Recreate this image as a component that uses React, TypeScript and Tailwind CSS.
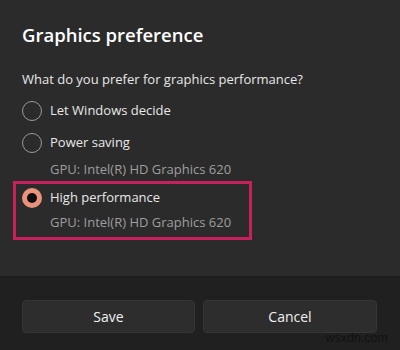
import React from 'react'

const font = { fontFamily: '"Open Sans", "Noto Sans", sans-serif' }

function Radio({ checked }: { checked?: boolean }) {
  if (checked) {
    return (
      <span className="flex h-[20px] w-[20px] shrink-0 items-center justify-center rounded-full bg-[#ea927c]">
        <span className="h-[10px] w-[10px] rounded-full bg-[#0e0e0e]" />
      </span>
    )
  }
  return <span className="h-[20px] w-[20px] shrink-0 rounded-full border border-[#9a9a9a]" />
}

function Option({
  label,
  gpu,
  checked,
  row = 'h-[32px]',
}: {
  label: string
  gpu?: string
  checked?: boolean
  row?: string
}) {
  return (
    <div className="flex flex-col">
      <div className={`flex items-center gap-[8px] ${row}`}>
        <Radio checked={checked} />
        <span className="text-[13px] text-[#e8e8e8]">{label}</span>
      </div>
      {gpu && <div className="-mt-[2px] pl-[28px] text-[13px] leading-[24px] text-[#9e9e9e]">{gpu}</div>}
    </div>
  )
}

export default function App() {
  return (
    <div className="relative flex h-[350px] w-[400px] flex-col bg-[#2b2b2b]" style={font}>
      <div className="flex h-[276px] flex-col px-[22px] pt-[20px]">
        <h1 className="text-[18.5px] font-semibold leading-[30px] text-white">Graphics preference</h1>
        <p className="mt-[19px] text-[13px] leading-[20px] text-[#e8e8e8]">What do you prefer for graphics performance?</p>
        <div className="mt-[6px] flex flex-col">
          <Option label="Let Windows decide" />
          <Option label="Power saving" gpu="GPU: Intel(R) HD Graphics 620" />
          <div className="-ml-[9px] w-[239px] border-[3px] border-[#c91f5c] pb-[3px] pl-[6px]">
            <Option label="High performance" gpu="GPU: Intel(R) HD Graphics 620" checked row="h-[28px]" />
          </div>
        </div>
      </div>
      <div className="flex flex-1 gap-[8px] border-t border-[#1c1c1c] bg-[#202020] px-[22px] pt-[23px]">
        <button className="h-[33px] w-[173px] rounded-[4px] border border-[#353535] bg-[#2d2d2d] text-[14px] text-[#f0f0f0]">
          Save
        </button>
        <button className="h-[33px] w-[174px] rounded-[4px] border border-[#353535] bg-[#2d2d2d] text-[14px] text-[#f0f0f0]">
          Cancel
        </button>
      </div>
      <span
        className="absolute bottom-[2px] right-[12px] text-[12.5px] text-[#121212]"
        style={{ fontFamily: '"Liberation Sans", Arial, sans-serif' }}
      >
        wsxdn.com
      </span>
    </div>
  )
}
